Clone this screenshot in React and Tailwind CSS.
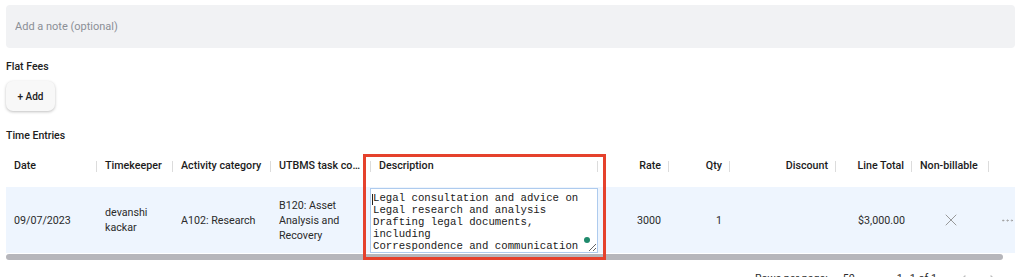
import React from 'react';
import { X, Ellipsis, ChevronLeft, ChevronRight, ChevronDown } from 'lucide-react';

const cols = 'grid grid-cols-[91px_76px_98px_100px_227px_71px_61px_106px_76px_77px_1fr]';

const headers = [
  { label: 'Date' },
  { label: 'Timekeeper' },
  { label: 'Activity category' },
  { label: 'UTBMS task co…' },
  { label: 'Description' },
  { label: 'Rate', right: true },
  { label: 'Qty', right: true },
  { label: 'Discount', right: true },
  { label: 'Line Total', right: true },
  { label: 'Non-billable' },
];

const description =
  'Legal consultation and advice on\nLegal research and analysis\nDrafting legal documents, including\nCorrespondence and communication';

const HeaderCell = ({ label, right }) => (
  <div className="flex items-center pl-2">
    <span className={`flex-1 whitespace-nowrap ${right ? 'text-right pr-[7px]' : ''}`}>{label}</span>
    <span className="w-px h-[11px] bg-[#dcdcdc]" />
  </div>
);

export default function App() {
  return (
    <div className="bg-white w-[1024px] h-[277px] overflow-hidden pl-[6px] pr-[9px] pt-[5px] font-['Roboto',sans-serif] text-[#212121]">
      {/* note */}
      <input
        readOnly
        placeholder="Add a note (optional)"
        className="w-full h-[43px] rounded-[4px] bg-[#f1f2f4] px-[9px] text-[11px] outline-none placeholder:text-[#8b8f96]"
      />

      <h3 className="mt-[12px] text-[10.5px] leading-[14px] font-medium">Flat Fees</h3>
      <button className="mt-[7px] w-[49px] h-[30px] rounded-[7px] bg-[#f8f8f8] text-[10px] font-medium text-[#222] shadow-[0_1px_3px_rgba(0,0,0,0.25)]">
        + Add
      </button>

      <h3 className="mt-[18px] text-[10.5px] leading-[14px] font-medium">Time Entries</h3>

      {/* table */}
      <div className="relative mt-[2px]">
        <div className={`${cols} h-[42px] text-[10.7px] font-medium text-[#1c1c1c]`}>
          {headers.map((h) => (
            <HeaderCell key={h.label} {...h} />
          ))}
          <div />
        </div>

        <div className={`${cols} h-[66px] bg-[#eef5fe] text-[10.7px] leading-[15px] text-[#2b2b2b]`}>
          <div className="flex items-center pl-2">09/07/2023</div>
          <div className="flex items-center pl-2">devanshi<br />kackar</div>
          <div className="flex items-center pl-2">A102: Research</div>
          <div className="flex items-center pl-2 pr-2">B120: Asset Analysis and Recovery</div>
          <div className="relative flex items-center">
            <textarea
              readOnly
              defaultValue={description}
              className="-ml-px w-[228px] h-[65px] mt-[1px] overflow-hidden resize bg-white border border-[#aecbee] pl-[2px] pt-[3px] font-['Liberation_Mono',monospace] text-[10.7px] leading-[12px] text-[#1a1a1a] outline-none"
            />
            <span className="absolute left-[1px] top-[7px] w-px h-[11px] bg-[#222]" />
            <span className="absolute left-[213px] top-[50px] w-[6px] h-[6px] rounded-full bg-[#1f8a6c]" />
          </div>
          <div className="flex items-center justify-end pr-[8px]">3000</div>
          <div className="flex items-center justify-end pr-[8px]">1</div>
          <div />
          <div className="flex items-center justify-end pr-[7px]">$3,000.00</div>
          <div className="flex items-center justify-center">
            <X size={20} strokeWidth={1.1} className="text-[#8f8f8f]" />
          </div>
          <div className="flex items-center justify-end">
            <Ellipsis size={15} strokeWidth={1.5} className="text-[#a0a0a0]" />
          </div>
        </div>

        {/* scrollbar */}
        <div className="h-[7px] pt-[0.5px]">
          <div className="mr-[12px] h-[6px] rounded-full bg-[#b6b6bb]" />
        </div>

        {/* highlight */}
        <div className="absolute left-[357px] top-[9px] w-[243px] h-[106px] border-[3px] border-[#e5412c] pointer-events-none" />

        {/* footer */}
        <div className="flex justify-end items-center h-[39px] pr-[14px] text-[10.7px] text-[#2b2b2b]">
          <span className="mr-[15px]">Rows per page:</span>
          <span>50</span>
          <ChevronDown size={14} className="ml-[6px] mr-[22px] text-[#666]" />
          <span className="mr-[18px]">1–1 of 1</span>
          <ChevronLeft size={16} className="text-[#bdbdbd]" />
          <ChevronRight size={16} className="ml-[14px] text-[#bdbdbd]" />
        </div>
      </div>
    </div>
  );
}
